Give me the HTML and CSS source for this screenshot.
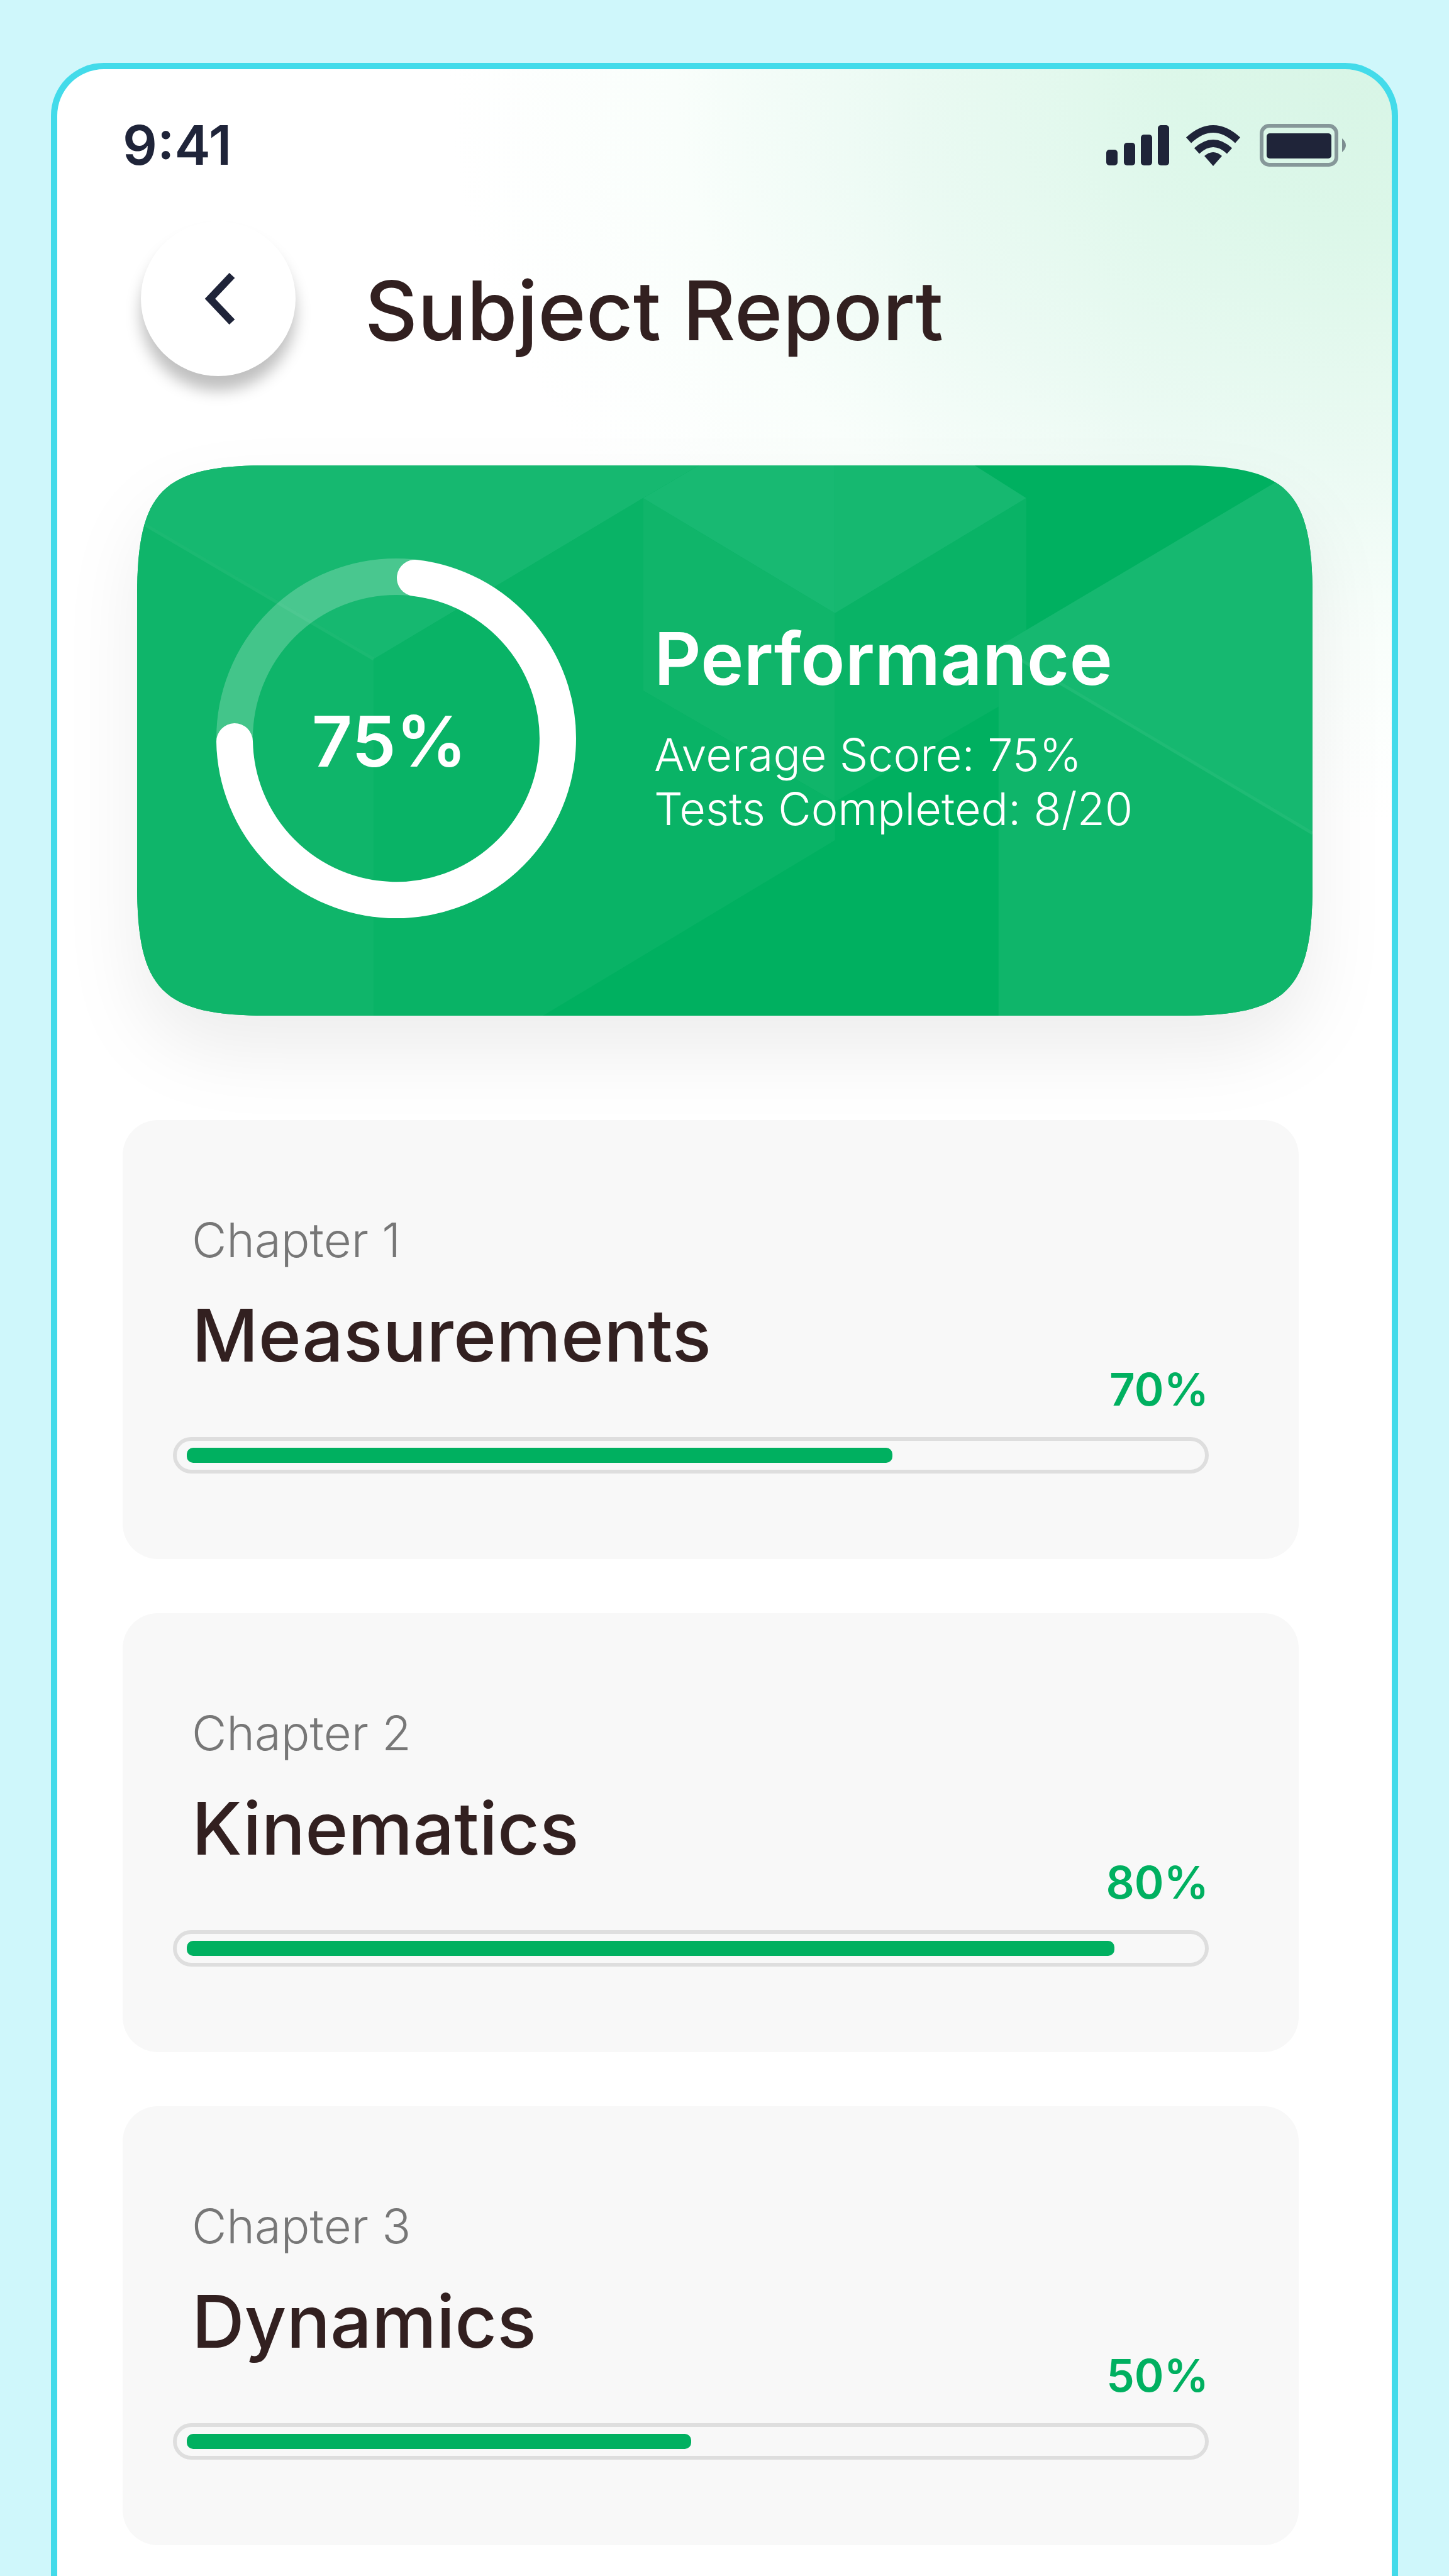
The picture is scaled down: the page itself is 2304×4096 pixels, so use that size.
FILE: index.html
```
<!DOCTYPE html>
<html lang="en">
  <head>
    <meta charset="UTF-8" />
    <meta name="viewport" content="width=device-width, initial-scale=1.0" />
    <title>Subject Report</title>
    <link rel="stylesheet" href="styles.css">
  </head>
  <body>
    <div class="screen">
      <div class="status">
        <span class="time">9:41</span>
        <svg class="status-icons" viewBox="0 0 390 70" aria-hidden="true">
          <g fill="#1f2439">
            <rect x="2" y="42" width="18" height="25" rx="5" />
            <rect x="30" y="31" width="18" height="36" rx="5" />
            <rect x="57" y="18" width="18" height="49" rx="5" />
            <rect x="84" y="3" width="18" height="64" rx="5" />
            <path d="M172 68 L158 52 Q172 40 186 52 Z" />
            <rect x="257" y="16" width="103" height="40" rx="5" />
            <path d="M377 24 Q389 35 377 46 Z" opacity="0.5" />
          </g>
          <g fill="none" stroke="#1f2439">
            <path d="M133 27 Q172 -9 211 27" stroke-width="12" />
            <path d="M146 44 Q172 20 198 44" stroke-width="12" />
            <rect x="249" y="4" width="119" height="62" rx="12" stroke-width="6" opacity="0.45" />
          </g>
        </svg>
      </div>

      <header class="header">
        <button class="back" type="button" aria-label="Back">
          <svg viewBox="0 0 56 82"><path d="M50 4 L15 41 L50 78" /></svg>
        </button>
        <h1 class="title">Subject Report</h1>
      </header>

      <section class="performance">
        <svg class="performance-bg" viewBox="0 0 1868 875" preserveAspectRatio="none" aria-hidden="true">
          <defs>
            <clipPath id="card">
              <path d="M0 208 C0 40 40 0 208 0 H1660 C1828 0 1868 40 1868 208 V667 C1868 835 1828 875 1660 875 H208 C40 875 0 835 0 667 Z" />
            </clipPath>
          </defs>
          <g clip-path="url(#card)">
            <rect width="1868" height="875" fill="#00b060" />
            <path d="M376 308 L804 52 V358 L1109 535 V596 L645 875 H376 Z" fill="#09b366" />
            <path d="M0 87 L376 308 V875 H0 Z" fill="#0fb56a" />
            <path d="M0 0 H893 L804 52 L376 308 L0 87 Z" fill="#16b870" />
            <path d="M804 52 L1109 235 V535 L804 358 Z" fill="#10b56a" />
            <path d="M1109 235 L1413 52 V358 L1109 535 Z" fill="#09b366" />
            <path d="M893 0 H1109 V235 L804 52 Z" fill="#18b972" />
            <path d="M1109 0 H1331 L1413 52 L1109 235 Z" fill="#16b870" />
            <path d="M1369 288 L1868 -8 V585 Z" fill="#16b870" />
            <path d="M1369 288 L1868 585 V875 H1369 Z" fill="#0fb56a" />
            <path d="M1369 288 L1868 585" stroke="#1fbb75" stroke-width="5" />
            <path d="M0 87 L376 308" stroke="#1bb972" stroke-width="5" />
          </g>
        </svg>
        <div class="ring">
          <svg viewBox="0 0 572 572" aria-hidden="true">
            <circle cx="286" cy="286" r="257" class="ring-track" />
            <path d="M316 31 A257 257 0 1 1 29 291" class="ring-value" />
          </svg>
          <span class="ring-text">75%</span>
        </div>
        <div class="summary">
          <h2>Performance</h2>
          <p>Average Score: 75%</p>
          <p>Tests Completed: 8/20</p>
        </div>
      </section>

      <main class="chapters">
        <article class="chapter">
          <p class="chapter-no">Chapter 1</p>
          <h2 class="chapter-name">Measurements</h2>
          <p class="percent">70%</p>
          <div class="bar"><div class="fill" style="width: 70%"></div></div>
        </article>
        <article class="chapter">
          <p class="chapter-no">Chapter 2</p>
          <h2 class="chapter-name">Kinematics</h2>
          <p class="percent">80%</p>
          <div class="bar"><div class="fill" style="width: 92%"></div></div>
        </article>
        <article class="chapter">
          <p class="chapter-no">Chapter 3</p>
          <h2 class="chapter-name">Dynamics</h2>
          <p class="percent">50%</p>
          <div class="bar"><div class="fill" style="width: 50%"></div></div>
        </article>
      </main>
    </div>
  </body>
</html>
```

FILE: styles.css
```
* {
  padding: 0;
  margin: 0;
  box-sizing: border-box;
}
body {
  min-height: 100vh;
  padding: 100px 81px 0;
  background: #cff7fb;
  font-family: Inter, "Liberation Sans", sans-serif;
  display: flex;
}

.screen {
  flex: 1;
  min-width: 0;
  padding: 86px 66px 49px 104px;
  border: 10px solid #43dbea;
  border-bottom: none;
  border-radius: 84px 84px 0 0;
  background: radial-gradient(ellipse 1500px 1200px at 100% 0, #d8f5e6 0%, #dcf7e9 22%, #ebfaf3 53%, #f9fefb 76%, #fff 100%) #fff;
}

/* status bar */
.status {
  height: 70px;
  display: flex;
  justify-content: space-between;
  align-items: center;
}
.time {
  color: #1f2439;
  font-size: 86px;
  line-height: 70px;
  font-weight: 600;
}
.status-icons {
  width: 390px;
  height: 70px;
}

/* header */
.header {
  margin: 86px 0 0 29px;
  display: flex;
  align-items: center;
  gap: 110px;
}
.back {
  width: 246px;
  height: 246px;
  border: none;
  border-radius: 50%;
  background: #fff;
  box-shadow: 0 23px 23px rgba(0, 0, 0, 0.25);
  display: flex;
  justify-content: center;
  align-items: center;
}
.back svg {
  width: 56px;
  height: 82px;
}
.back path {
  fill: none;
  stroke: #1f2439;
  stroke-width: 12;
}
.title {
  color: #322020;
  font-size: 130px;
  line-height: 160px;
  font-weight: 500;
  padding-top: 38px;
}

/* performance card */
.performance {
  position: relative;
  margin: 142px 60px 0 23px;
  height: 875px;
  padding: 0 126px;
  display: flex;
  align-items: center;
  gap: 124px;
  color: #fff;
  filter: drop-shadow(0 57px 57px rgba(0, 0, 0, 0.07));
}
.performance-bg {
  position: absolute;
  inset: 0;
  width: 100%;
  height: 100%;
}
.ring {
  position: relative;
  padding-bottom: 8px;
  display: grid;
  place-items: center;
}
.ring svg {
  width: 572px;
  height: 572px;
  grid-area: 1 / 1;
  fill: none;
  stroke-width: 58;
}
.ring-track {
  stroke: rgba(255, 255, 255, 0.22);
}
.ring-value {
  stroke: #fff;
  stroke-linecap: round;
}
.ring-text {
  grid-area: 1 / 1;
  padding: 8px 22px 0 0;
  font-size: 112px;
  font-weight: 600;
}
.summary {
  position: relative;
  padding-bottom: 52px;
}
.summary h2 {
  font-size: 116px;
  line-height: 144px;
  font-weight: 600;
  margin-bottom: 38px;
}
.summary p {
  font-size: 72px;
  line-height: 86px;
  font-weight: 300;
}

/* chapters */
.chapters {
  margin: 166px 82px 0 0;
  display: grid;
  gap: 86px;
}
.chapter {
  height: 698px;
  padding: 140px 143px 0 80px;
  border-radius: 56px;
  background: #f8f8f8;
}
.chapter-no {
  padding-left: 30px;
  color: #777;
  font-size: 76px;
  line-height: 100px;
  font-weight: 300;
}
.chapter-name {
  padding-left: 30px;
  color: #322020;
  font-size: 116px;
  line-height: 120px;
  font-weight: 500;
  margin-top: 42px;
}
.percent {
  color: #00b060;
  font-size: 71px;
  line-height: 52px;
  font-weight: 600;
  text-align: right;
  margin-bottom: 50px;
}
.bar {
  height: 58px;
  padding: 11px 16px;
  border: 6px solid #dedede;
  border-radius: 29px;
}
.fill {
  height: 24px;
  border-radius: 10px;
  background: #00b060;
}
```
